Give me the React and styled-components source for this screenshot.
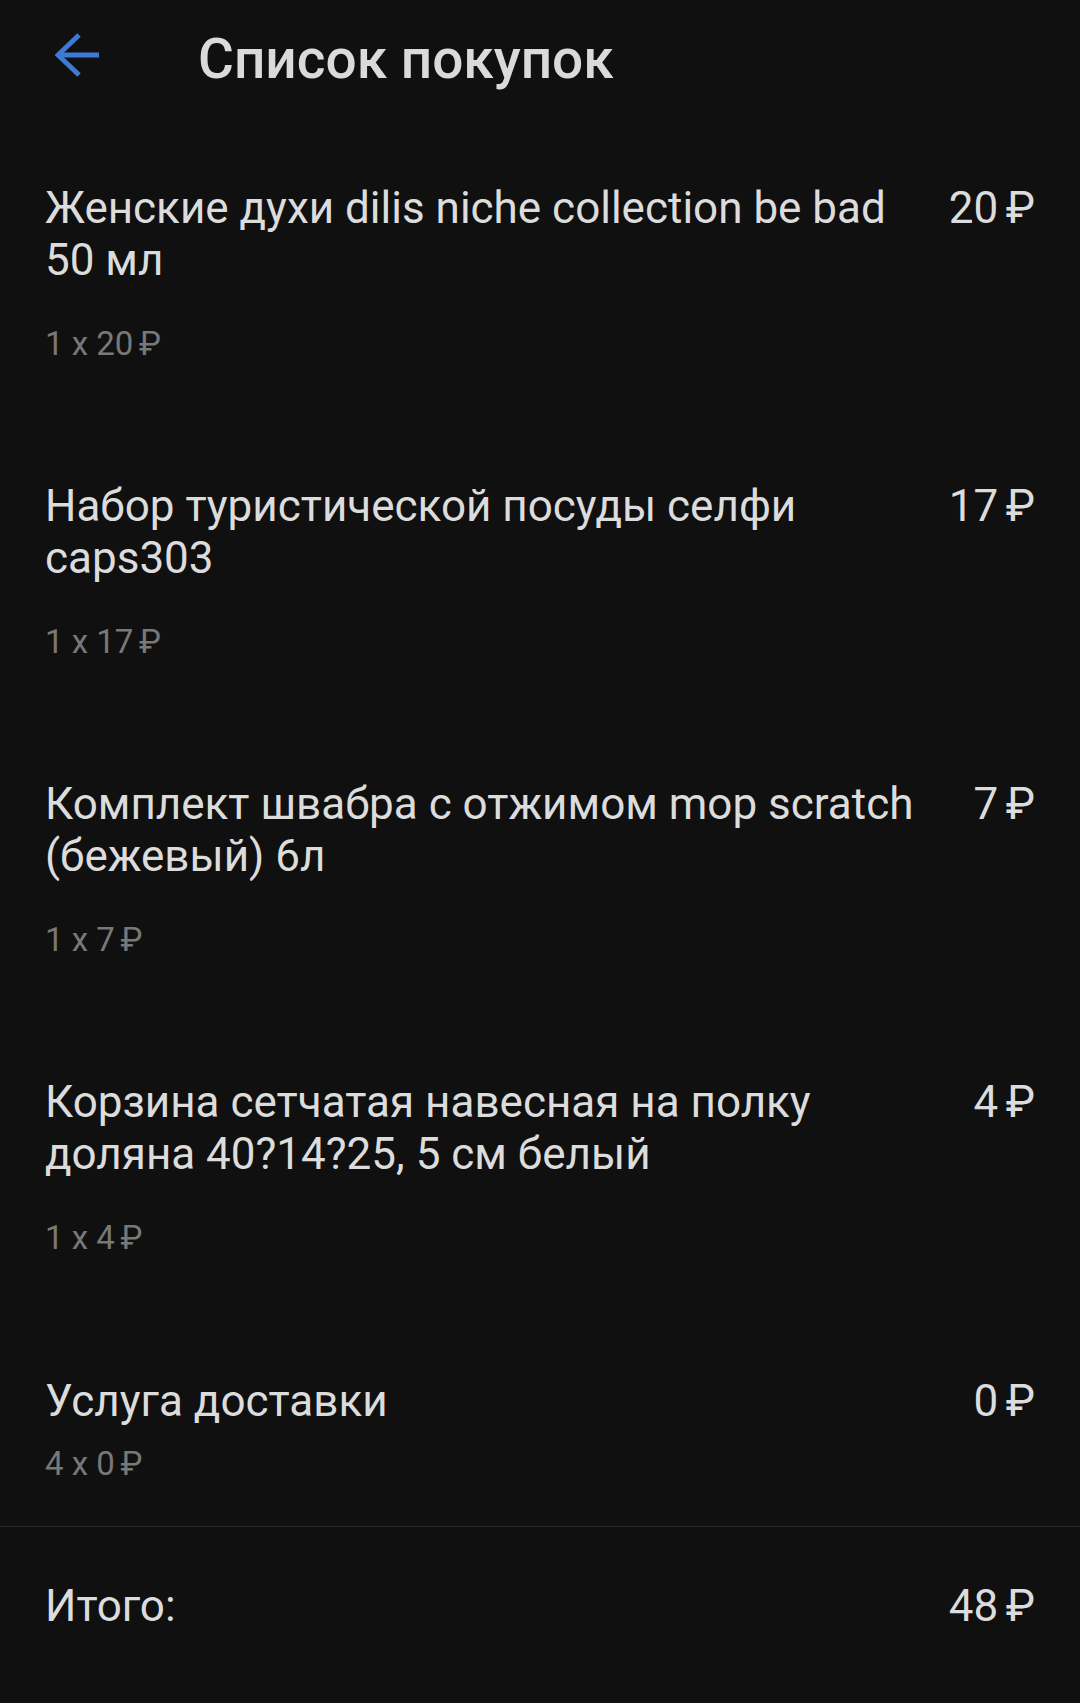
import React from 'react';
import styled, { createGlobalStyle } from 'styled-components';

const GlobalStyle = createGlobalStyle`
  html, body {
    margin: 0;
    padding: 0;
    background: #101010;
  }
`;

const Page = styled.div`
  min-height: 100vh;
  background: #101010;
  font-family: Roboto, 'Noto Sans', sans-serif;
  color: #dcdcdc;
`;

const Header = styled.header`
  display: flex;
  align-items: center;
  padding: 26px 0 0 55px;
`;

const BackButton = styled.button`
  display: flex;
  width: 44px;
  height: 44px;
  padding: 0;
  margin: 0 99px 8px 0;
  border: none;
  background: none;
  cursor: pointer;
`;

const Title = styled.h1`
  margin: 0;
  font-size: 55px;
  line-height: 66px;
  font-weight: 500;
  color: #dadada;
`;

const List = styled.ul`
  list-style: none;
  margin: 90px 0 0;
  padding: 0 45px;
`;

const Item = styled.li`
  margin-bottom: ${p => p.$after}px;
`;

const Row = styled.div`
  display: flex;
  justify-content: space-between;
  gap: 32px;
  font-size: 44px;
  line-height: 52px;
`;

const Name = styled.div`
  flex: 1;
`;

const Price = styled.div`
  white-space: nowrap;
`;

const Sub = styled.div`
  margin-top: ${p => p.$gap}px;
  font-size: 33px;
  line-height: 40px;
  color: #787878;
`;

const Rub = styled.span`
  margin-left: 0.17em;
`;

const Divider = styled.hr`
  margin: 0;
  border: none;
  border-top: 1px solid #2a2a2a;
`;

const Total = styled.div`
  display: flex;
  justify-content: space-between;
  padding: 53px 45px;
  font-size: 44px;
  line-height: 52px;
`;

const items = [
  { name: 'Женские духи dilis niche collection be bad 50 мл', qty: 1, price: 20 },
  { name: 'Набор туристической посуды селфи caps303', qty: 1, price: 17 },
  { name: 'Комплект швабра с отжимом mop scratch (бежевый) 6л', qty: 1, price: 7 },
  { name: 'Корзина сетчатая навесная на полку доляна 40?14?25, 5 см белый', qty: 1, price: 4 },
];

const Money = ({ value }) => (
  <>
    {value}
    <Rub>₽</Rub>
  </>
);

function App() {
  const total = items.reduce((s, i) => s + i.qty * i.price, 0);
  return (
    <Page>
      <GlobalStyle />
      <Header>
        <BackButton aria-label="Назад">
          <svg width="44" height="44" viewBox="0 0 44 44" fill="none" stroke="#3d7ad6" strokeWidth="5">
            <path d="M44 22H3" />
            <path d="M24 2L3 22l21 20" />
          </svg>
        </BackButton>
        <Title>Список покупок</Title>
      </Header>
      <List>
        {items.map((it, idx) => (
          <Item key={idx} $after={idx === items.length - 1 ? 117 : 116}>
            <Row>
              <Name>{it.name}</Name>
              <Price><Money value={it.qty * it.price} /></Price>
            </Row>
            <Sub $gap={38}>{it.qty} x <Money value={it.price} /></Sub>
          </Item>
        ))}
        <Item $after={42}>
          <Row>
            <Name>Услуга доставки</Name>
            <Price><Money value={0} /></Price>
          </Row>
          <Sub $gap={17}>4 x <Money value={0} /></Sub>
        </Item>
      </List>
      <Divider />
      <Total>
        <span>Итого:</span>
        <span><Money value={total} /></span>
      </Total>
    </Page>
  );
}

export default App;
